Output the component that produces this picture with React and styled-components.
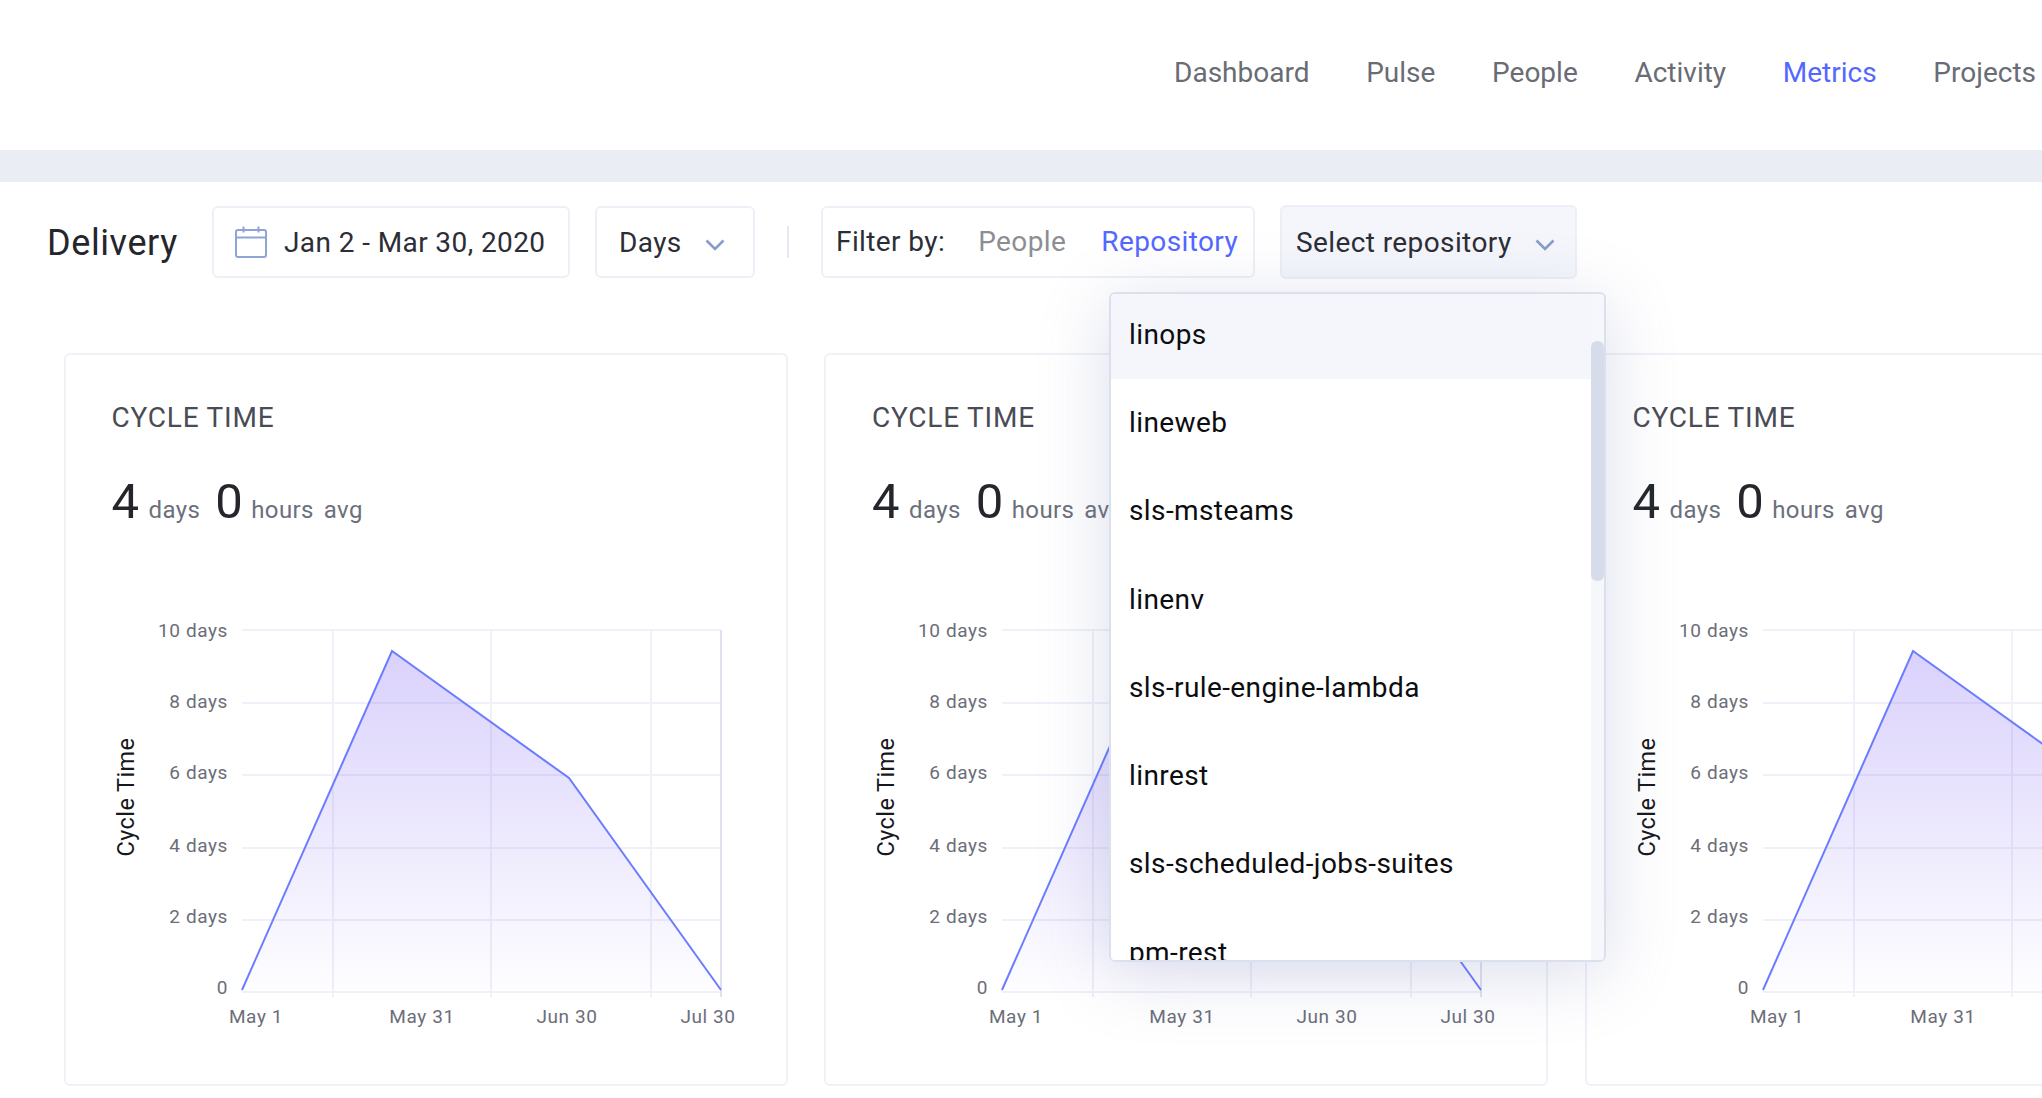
import styled, { createGlobalStyle } from 'styled-components';

const GlobalStyle = createGlobalStyle`
  html, body {
    margin: 0;
    background: #fff;
    font-family: Roboto, "Liberation Sans", sans-serif;
    letter-spacing: 0.4px;
  }
`;

const Page = styled.div`
  width: 2042px;
  height: 1098px;
  overflow: hidden;
`;

const Header = styled.header`
  height: 150px;
  display: flex;
  justify-content: flex-end;
  align-items: center;
  gap: 56.7px;
  padding: 0 6px 6px 0;
  box-sizing: border-box;
`;

const NavItem = styled.a`
  font-size: 28px;
  letter-spacing: 0;
  color: ${(p) => (p.$active ? '#5468ff' : '#696c74')};
`;

const Band = styled.div`
  height: 32px;
  background: #ebedf5;
`;

const Toolbar = styled.div`
  display: flex;
  align-items: center;
  gap: 25px;
  height: 74px;
  margin-top: 23px;
  padding-left: 47px;
`;

const Heading = styled.h1`
  margin: 2px 9px 0 0;
  width: 131px;
  font-size: 36px;
  font-weight: 400;
  letter-spacing: 0.6px;
  color: #24262c;
  white-space: nowrap;
`;

const Box = styled.div`
  display: flex;
  align-items: center;
  box-sizing: border-box;
  width: ${(p) => p.$w}px;
  height: 72px;
  padding: 0 ${(p) => p.$padR || 14}px 0 ${(p) => p.$pad || 14}px;
  border: 2px solid #eef0f7;
  border-radius: 6px;
  font-size: 28px;
  color: #2c2e36;
  background: #fff;
  white-space: nowrap;

  svg {
    flex: none;
  }
`;

const DateBox = styled(Box)`
  gap: 17px;
`;

const SelectBox = styled(Box)`
  justify-content: space-between;

  svg {
    margin-top: 5px;
  }
`;

const Divider = styled.div`
  width: 2px;
  height: 32px;
  margin: 0 7px;
  background: #e6e9f2;
`;

const FilterBox = styled(Box)`
  padding-bottom: 2px;
`;

const FilterOption = styled.span`
  margin-left: ${(p) => p.$gap}px;
  color: ${(p) => (p.$active ? '#5468ff' : '#8c8e94')};
`;

const RepoWrap = styled.div`
  position: relative;
`;

const RepoBox = styled(SelectBox)`
  height: 74px;
  background: #f4f6fb;
  border-color: #eceff7;
`;

const Dropdown = styled.div`
  position: absolute;
  z-index: 5;
  top: 87px;
  left: -171px;
  width: 497px;
  height: 670px;
  box-sizing: border-box;
  display: flex;
  overflow: hidden;
  background: #fff;
  border: 2px solid #dbe0ee;
  border-radius: 6px;
`;

const DropdownShadow = styled.div`
  position: absolute;
  z-index: 4;
  top: 87px;
  left: -171px;
  width: 497px;
  height: 670px;
  border-radius: 6px;
  box-shadow: 0 12px 70px rgba(95, 105, 170, 0.22);
`;

const RepoList = styled.ul`
  flex: 1;
  margin: -3px 0 0;
  padding: 0;
  list-style: none;
`;

const RepoItem = styled.li`
  height: 88.3px;
  box-sizing: border-box;
  display: flex;
  align-items: center;
  padding: 0 0 2px 18px;
  font-size: 28px;
  color: #0c0d10;
  background: ${(p) => (p.$hover ? '#f4f6fb' : '#fff')};
`;

const ScrollTrack = styled.div`
  width: 13px;
  background: #f6f7fa;
`;

const ScrollThumb = styled.div`
  width: 13px;
  height: 240px;
  margin-top: 47px;
  border-radius: 6px;
  background: #d6dce9;
`;

const CardRow = styled.div`
  display: flex;
  gap: 36.5px;
  margin: 74px 0 0 63.5px;
`;

const Card = styled.section`
  flex: 0 0 724px;
  height: 733px;
  box-sizing: border-box;
  border: 2px solid #eff1f7;
  border-radius: 6px;
`;

const CardTitle = styled.h2`
  margin: 47px 0 0 46px;
  font-size: 28px;
  line-height: 32px;
  font-weight: 400;
  letter-spacing: 0.8px;
  color: #4a4c55;
`;

const Stat = styled.div`
  display: flex;
  align-items: baseline;
  margin: 39px 0 0 46px;
  line-height: 58px;
  color: #24262c;
`;

const StatValue = styled.span`
  font-size: 49px;
  margin-right: ${(p) => p.$gap}px;
`;

const StatUnit = styled.span`
  font-size: 24px;
  color: #6c707c;
  margin-right: ${(p) => p.$gap}px;
`;

const ChartSvg = styled.svg`
  display: block;
  margin-top: 61px;
`;

const Tick = styled.text`
  font-size: 19px;
  letter-spacing: 0.6px;
  fill: #6b6e78;
`;

const AxisTitle = styled.text`
  font-size: 23.5px;
  fill: #17181c;
`;

function CalendarIcon() {
  return (
    <svg width="32" height="32" viewBox="0 0 32 32" fill="none" stroke="#8fa3d4" strokeWidth="2">
      <rect x="1" y="4" width="30" height="27" rx="2" />
      <path d="M1 11.5h30M8.5 0.5v6M23.5 0.5v6" />
    </svg>
  );
}

function Chevron() {
  return (
    <svg width="20" height="12" viewBox="0 0 20 12" fill="none" stroke="#8a9ccb" strokeWidth="2.6">
      <path d="M1.5 1.5 10 10l8.5-8.5" />
    </svg>
  );
}

const gridY = [30, 103, 175, 248, 320, 392];
const gridX = [267, 425, 585, 655];
const yTicks = ['10 days', '8 days', '6 days', '4 days', '2 days', '0'];
const yTickPos = [37, 108, 179, 252, 323, 394];
const xTicks = [['May 1', 190], ['May 31', 356], ['Jun 30', 501], ['Jul 30', 642]];

function CycleChart({ id }) {
  return (
    <ChartSvg width="720" height="450" viewBox="0 0 720 450">
      <defs>
        <linearGradient id={id} x1="0" y1="50" x2="0" y2="392" gradientUnits="userSpaceOnUse">
          <stop offset="0" stopColor="#7a5cf5" stopOpacity="0.28" />
          <stop offset="1" stopColor="#7a5cf5" stopOpacity="0.01" />
        </linearGradient>
      </defs>
      {gridY.map((y) => (
        <line key={y} x1="176" x2="655" y1={y} y2={y} stroke="#eff0f8" strokeWidth="2" />
      ))}
      {gridX.map((x, i) => (
        <line key={x} x1={x} x2={x} y1="30" y2="397" stroke={i === 3 ? '#dfe2ee' : '#eff0f8'} strokeWidth="2" />
      ))}
      <path d="M176 390 326 51 503 178 655 390Z" fill={`url(#${id})`} />
      <path d="M176 390 326 51 503 178 655 390" fill="none" stroke="#6b7cff" strokeWidth="2" />
      {yTicks.map((t, i) => (
        <Tick key={t} x="162" y={yTickPos[i]} textAnchor="end">{t}</Tick>
      ))}
      {xTicks.map(([t, x]) => (
        <Tick key={t} x={x} y="423" textAnchor="middle">{t}</Tick>
      ))}
      <AxisTitle transform="translate(68 197) rotate(-90)" textAnchor="middle">Cycle Time</AxisTitle>
    </ChartSvg>
  );
}

function MetricCard({ id }) {
  return (
    <Card>
      <CardTitle>CYCLE TIME</CardTitle>
      <Stat>
        <StatValue $gap={9}>4</StatValue>
        <StatUnit $gap={15}>days</StatUnit>
        <StatValue $gap={8}>0</StatValue>
        <StatUnit $gap={10}>hours</StatUnit>
        <StatUnit $gap={0}>avg</StatUnit>
      </Stat>
      <CycleChart id={id} />
    </Card>
  );
}

const navItems = ['Dashboard', 'Pulse', 'People', 'Activity', 'Metrics', 'Projects'];
const repos = [
  'linops',
  'lineweb',
  'sls-msteams',
  'linenv',
  'sls-rule-engine-lambda',
  'linrest',
  'sls-scheduled-jobs-suites',
  'pm-rest',
];

export default function App() {
  return (
    <Page>
      <GlobalStyle />
      <Header>
        {navItems.map((n) => (
          <NavItem key={n} $active={n === 'Metrics'}>{n}</NavItem>
        ))}
      </Header>
      <Band />
      <Toolbar>
        <Heading>Delivery</Heading>
        <DateBox $w={358} $pad={21}>
          <CalendarIcon />
          Jan 2 - Mar 30, 2020
        </DateBox>
        <SelectBox $w={160} $pad={22} $padR={28}>
          Days
          <Chevron />
        </SelectBox>
        <Divider />
        <FilterBox $w={434} $pad={13}>
          Filter by:
          <FilterOption $gap={33}>People</FilterOption>
          <FilterOption $gap={35} $active>Repository</FilterOption>
        </FilterBox>
        <RepoWrap>
          <RepoBox $w={297} $padR={20}>
            Select repository
            <Chevron />
          </RepoBox>
          <DropdownShadow />
          <Dropdown>
            <RepoList>
              {repos.map((r, i) => (
                <RepoItem key={r} $hover={i === 0}>{r}</RepoItem>
              ))}
            </RepoList>
            <ScrollTrack>
              <ScrollThumb />
            </ScrollTrack>
          </Dropdown>
        </RepoWrap>
      </Toolbar>
      <CardRow>
        <MetricCard id="area-a" />
        <MetricCard id="area-b" />
        <MetricCard id="area-c" />
      </CardRow>
    </Page>
  );
}
